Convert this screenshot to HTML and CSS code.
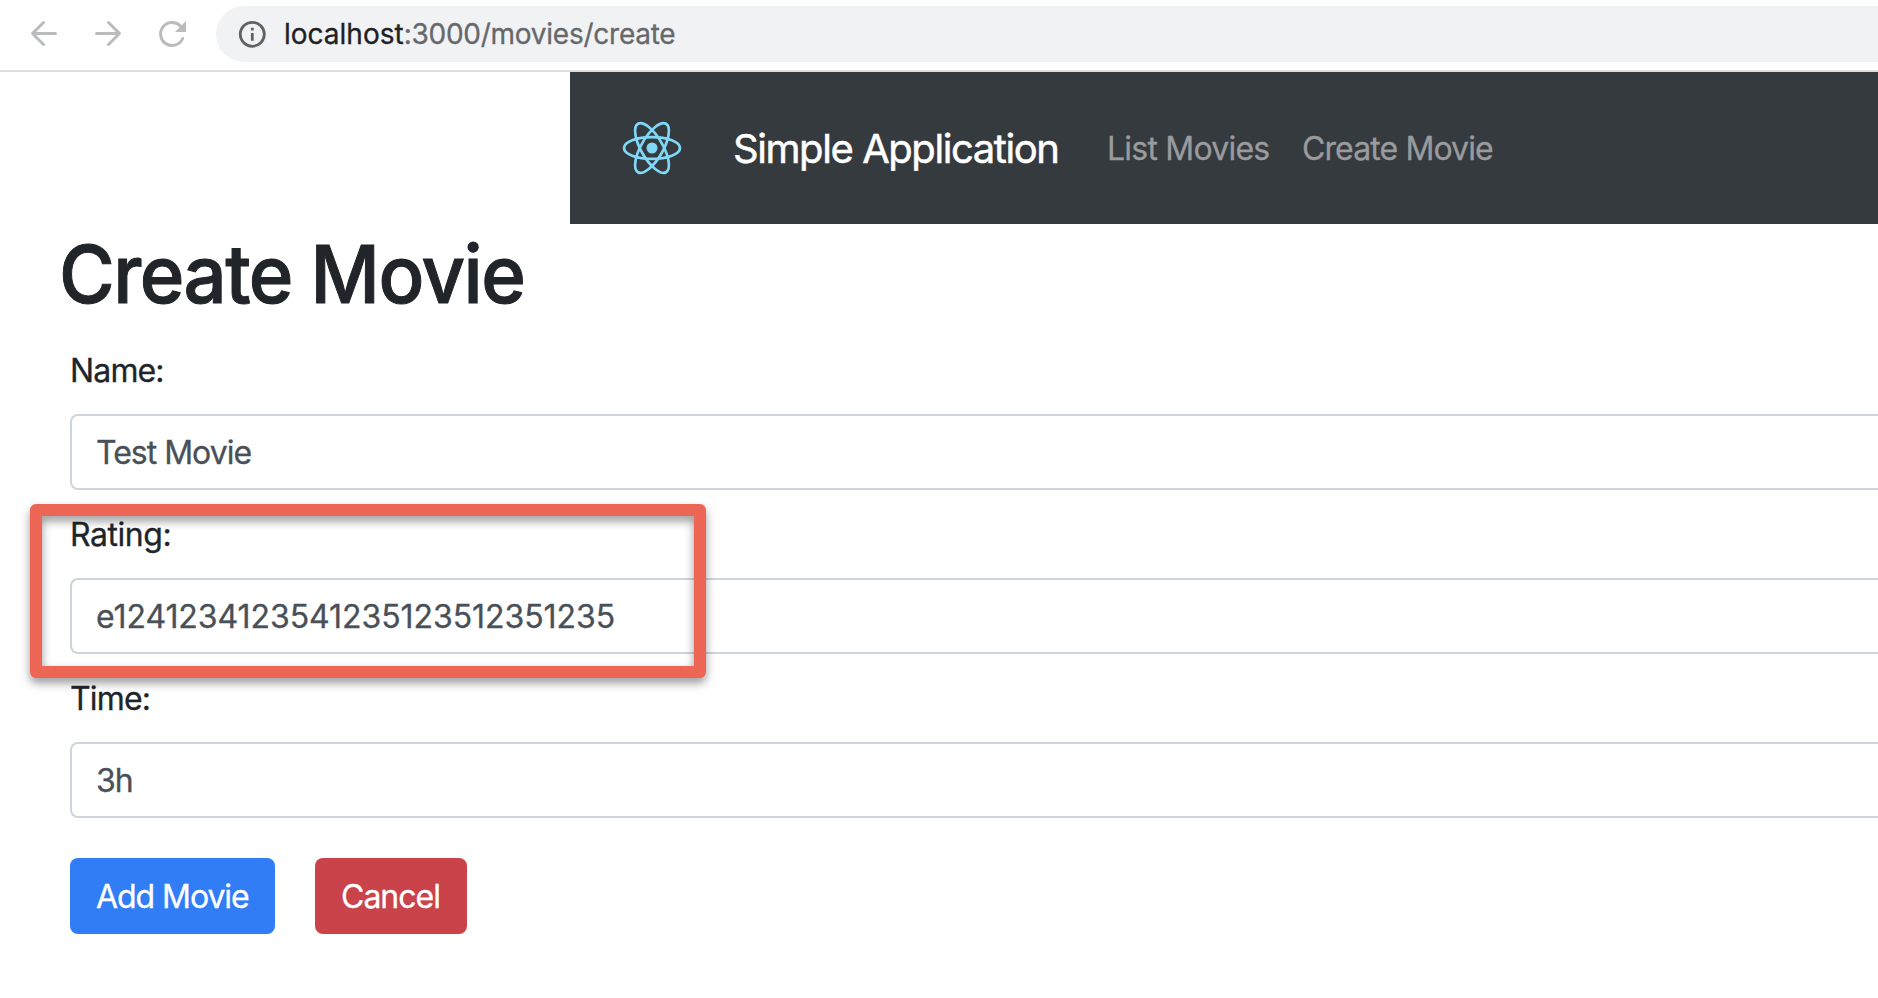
FILE: index.html
```html
<!DOCTYPE html>
<html lang="en">
<head>
<meta charset="utf-8">
<title>Simple Application</title>
<link rel="stylesheet" href="styles.css">
</head>
<body>
<div class="toolbar">
  <svg class="toolbar-icons" width="216" height="70" viewBox="0 0 216 70" fill="none" stroke="#b9bbbd" stroke-width="3" stroke-linecap="round" stroke-linejoin="round">
    <path d="M55.5 33.5H33M43.5 22.5L32.5 33.5L43.5 44.5"/>
    <path d="M96.500 33.5H119M108.500 22.500L119.500 33.500L108.500 44.500"/>
    <path d="M182.700 38.500A11.500 11.500 0 1 1 180.300 25.900"/>
    <path d="M186 21V32H175Z" fill="#b9bbbd" stroke="none"/>
  </svg>
  <div class="address">
    <svg width="28" height="28" viewBox="0 0 28 28" fill="none" stroke="#5f6368" stroke-width="2.800">
      <circle cx="14.300" cy="14.300" r="12"/>
      <path d="M14.300 13V20.800M14.300 7.700V10.500"/>
    </svg>
    <span class="url"><span class="host">localhost</span><span class="path">:3000/movies/create</span></span>
  </div>
</div>
<nav class="navbar">
  <svg class="logo" width="60" height="60" viewBox="-30 -30 60 60" fill="none" stroke="#7fd8f8" stroke-width="2.700">
    <ellipse rx="28" ry="10.900"/>
    <ellipse rx="28" ry="10.900" transform="rotate(60)"/>
    <ellipse rx="28" ry="10.900" transform="rotate(120)"/>
    <circle r="5.500" fill="#7fd8f8" stroke="none"/>
  </svg>
  <a class="brand">Simple Application</a>
  <a class="link link-list">List Movies</a>
  <a class="link link-create">Create Movie</a>
</nav>
<main class="content">
  <h1 class="title">Create Movie</h1>
  <form class="form">
    <label class="label label-name">Name:</label>
    <div class="field">Test Movie</div>
    <label class="label label-rating">Rating:</label>
    <div class="field field-rating">e1241234123541235123512351235</div>
    <label class="label label-time">Time:</label>
    <div class="field">3h</div>
    <div class="actions">
      <button class="button add" type="button">Add Movie</button>
      <button class="button cancel" type="button">Cancel</button>
    </div>
  </form>
</main>
<div class="highlight"></div>
</body>
</html>
```
FILE: styles.css
```css
* { box-sizing: border-box; }
body { position: relative; width: 1878px; height: 998px; margin: 0; overflow: hidden; background: #fff; color: #212529; font: 400 32px/48px Inter, "Liberation Sans", sans-serif; -webkit-text-stroke: .3px; }

.toolbar { display: flex; height: 72px; border-bottom: 2px solid #dcdddd; }
.toolbar-icons { flex: none; }
.address { display: flex; flex: 1; align-items: center; height: 56px; margin-top: 6px; padding-left: 22px; border-radius: 28px 0 0 28px; background: #f1f2f4; }
.url { margin-left: 18px; font-size: 28px; line-height: 56px; white-space: nowrap; }
.host { color: #202124; }
.path { color: #66686b; letter-spacing: -.25px; }

.navbar { display: flex; align-items: center; height: 152px; margin-left: 570px; padding-left: 52px; background: #353a3e; white-space: nowrap; }
.logo { flex: none; }
.brand { width: 374px; margin-left: 51px; padding-top: 2px; color: #fff; font-size: 40px; letter-spacing: -1.43px; -webkit-text-stroke: .5px; }
.link { padding-top: 2px; color: #999b9e; }
.link-list { width: 195px; letter-spacing: -.78px; }
.link-create { letter-spacing: -.89px; }

.title { width: 520px; height: 96px; margin: 2px 0 25px 59px; font-size: 80px; font-weight: 500; line-height: 96px; letter-spacing: -1.6px; white-space: nowrap; transform: scaleX(.95); transform-origin: left; -webkit-text-stroke: 1px; }
.form { display: flex; flex-direction: column; padding-left: 70px; }
.label { height: 67px; }
.label-name { letter-spacing: -.85px; }
.label-rating { letter-spacing: -.45px; }
.label-time { letter-spacing: -.85px; }
.field { height: 76px; margin-bottom: 21px; padding: 13px 24px 11px; border: 2px solid #ced4da; border-right: 0; border-radius: 8px 0 0 8px; color: #495057; letter-spacing: -1px; }
.field-rating { letter-spacing: -.06px; }
.actions { display: flex; gap: 40px; margin-top: 19px; }
.button { height: 76px; padding: 2px 0 0 26px; border: 0; border-radius: 8px; color: #fff; font: inherit; text-align: left; white-space: nowrap; }
.add { width: 205px; background: #307df6; letter-spacing: -1.05px; }
.cancel { width: 152px; background: #ca434a; letter-spacing: -1px; }

/* Callout frame laid over the rating field */
.highlight { position: absolute; left: 30px; top: 504px; width: 676px; height: 174px; border: 12px solid #ed6555; border-radius: 6px; filter: drop-shadow(0 5px 5px rgba(0, 0, 0, .4)); }
```
